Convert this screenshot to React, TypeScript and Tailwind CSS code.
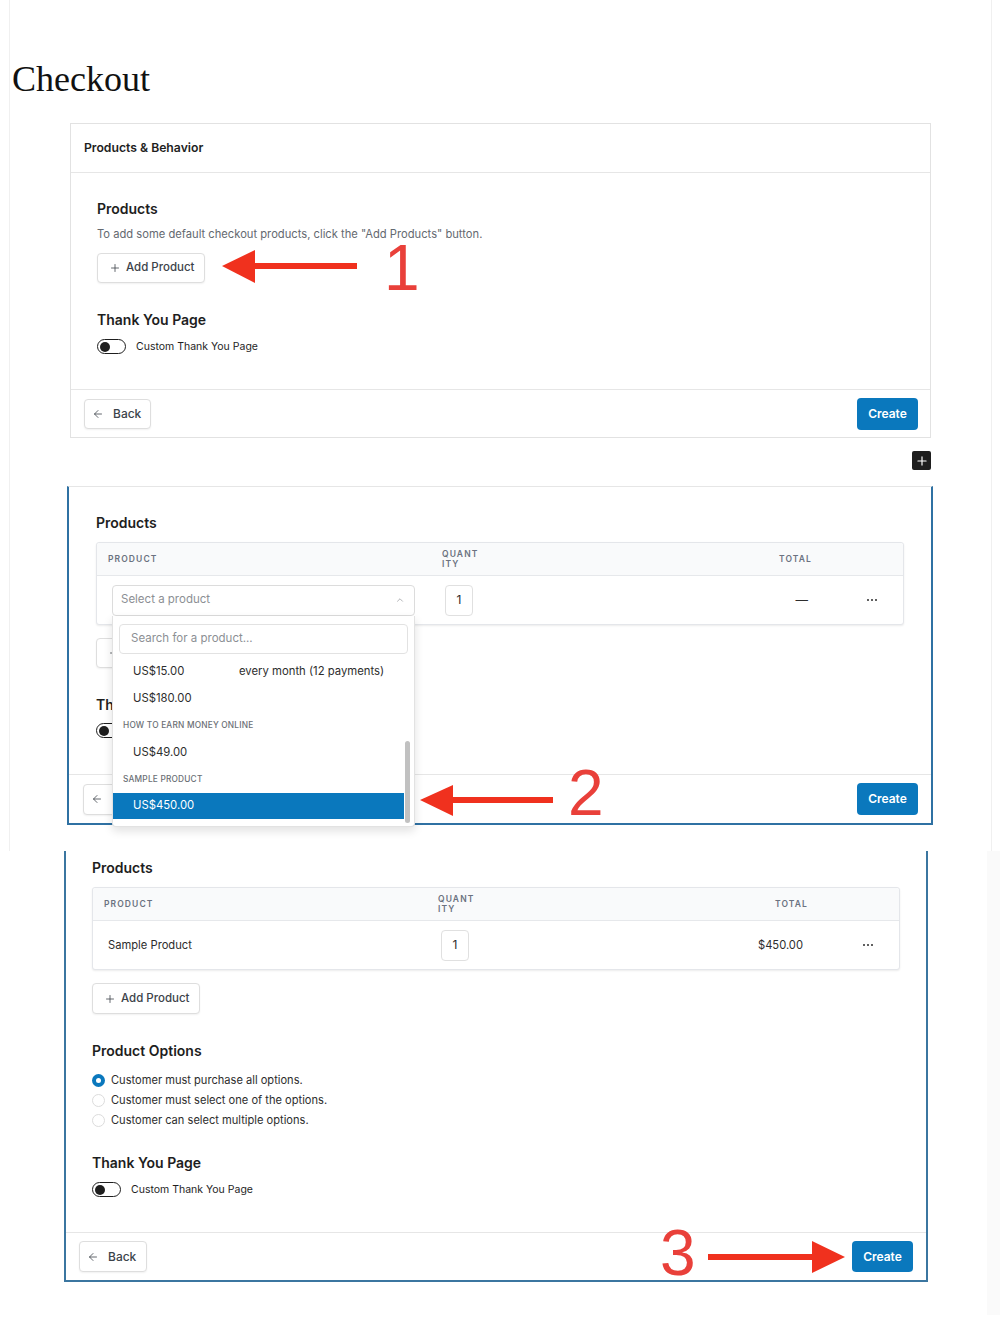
import React from "react";
import { Plus, ArrowLeft, ChevronUp } from "lucide-react";

const Toggle = () => (
  <div className="w-[29px] h-[15px] rounded-full border-[1.5px] border-[#1e1e1e] bg-white flex items-center pl-[1.5px] shrink-0">
    <div className="w-[10px] h-[10px] rounded-full bg-[#1e1e1e]" />
  </div>
);

const ToggleRow = () => (
  <div className="flex items-center gap-[10px] h-[15px]">
    <Toggle />
    <span className="text-[10.5px] text-[#1e1e1e]">Custom Thank You Page</span>
  </div>
);

const AddButton = ({ tall = false }: { tall?: boolean }) => (
  <div
    className={`${tall ? "h-[31px]" : "h-[30px]"} w-[108px] border border-[#dedede] rounded-[4px] bg-white shadow-[0_1px_2px_rgba(0,0,0,0.06)] flex items-center pl-[11px] gap-[5px] text-[11.5px] font-medium text-[#3c434a]`}
  >
    <Plus size={12} strokeWidth={1.6} />
    <span>Add Product</span>
  </div>
);

const BackButton = ({ tall = false }: { tall?: boolean }) => (
  <div
    className={`${tall ? "h-[31px] w-[68px]" : "h-[30px] w-[67px]"} border border-[#dedede] rounded-[4px] bg-white shadow-[0_1px_2px_rgba(0,0,0,0.06)] flex items-center pl-[7px] gap-[9px] text-[12px] font-medium text-[#3c434a]`}
  >
    <ArrowLeft size={12} strokeWidth={1.6} />
    <span>Back</span>
  </div>
);

const CreateButton = ({ tall = true }: { tall?: boolean }) => (
  <div
    className={`${tall ? "h-[32px]" : "h-[31px]"} w-[61px] rounded-[4px] bg-[#0a78bd] text-white text-[12px] font-semibold flex items-center justify-center`}
  >
    Create
  </div>
);

const Dots = () => (
  <div className="flex items-center gap-[2px]">
    <div className="w-[2px] h-[2px] rounded-full bg-[#2d2d2d]" />
    <div className="w-[2px] h-[2px] rounded-full bg-[#2d2d2d]" />
    <div className="w-[2px] h-[2px] rounded-full bg-[#2d2d2d]" />
  </div>
);

const TableHeader = () => (
  <div className="flex h-[33px] items-center bg-[#f9fafb] border-b border-[#e6e8eb] rounded-t-[3px] text-[8.5px] font-semibold tracking-[1.1px] text-[#6b7280]">
    <div className="w-[345px] pl-[11px]">PRODUCT</div>
    <div className="w-[254px] leading-[10px]">
      <div>QUANT</div>
      <div>ITY</div>
    </div>
    <div className="w-[116px] text-right">TOTAL</div>
  </div>
);

const QtyBox = () => (
  <div className="ml-[3px] w-[28px] h-[31px] border border-[#e0e0e0] rounded-[4px] bg-white flex items-center justify-center text-[12px] text-[#2d2d2d]">
    1
  </div>
);

const Dropdown = () => (
  <div className="absolute left-0 top-full z-10 w-[303px] h-[211px] bg-white border-x border-b border-[#e2e2e2] rounded-b-[4px] shadow-[0_4px_10px_rgba(0,0,0,0.12)] overflow-hidden">
    <div className="pt-[8px] px-[6px] pb-[4px]">
      <div className="h-[30px] border border-[#e2e2e2] rounded-[4px] flex items-center pl-[11px] text-[11.5px] text-[#8c8f94]">
        Search for a product...
      </div>
    </div>
    <div className="w-[291px] text-[11.3px] text-[#2d2d2d]">
      <div className="h-[27px] flex items-center pl-[20px]">
        <span className="w-[106px]">US$15.00</span>
        <span>every month (12 payments)</span>
      </div>
      <div className="h-[27px] flex items-center pl-[20px]">US$180.00</div>
      <div className="h-[27px] flex items-center pl-[10px] text-[8.3px] font-medium tracking-[0.2px] text-[#6b6f75]">
        HOW TO EARN MONEY ONLINE
      </div>
      <div className="h-[27px] flex items-center pl-[20px]">US$49.00</div>
      <div className="h-[27px] flex items-center pl-[10px] text-[8.3px] font-medium tracking-[0.2px] text-[#6b6f75]">
        SAMPLE PRODUCT
      </div>
      <div className="h-[26px] flex items-center pl-[20px] bg-[#0a78bd] text-white">US$450.00</div>
    </div>
    <div className="absolute right-[4px] top-[125px] w-[5px] h-[82px] rounded-full bg-[#c1c1c1]" />
  </div>
);

const Heading = ({ children, className = "" }: { children: React.ReactNode; className?: string }) => (
  <h3 className={`text-[14px] leading-[20px] font-semibold text-[#1e1e1e] ${className}`}>{children}</h3>
);

export default function App() {
  return (
    <div className="relative w-[1000px] h-[1332px] bg-white overflow-hidden font-['Inter','Noto_Sans',sans-serif]">
      {/* Top section */}
      <div className="ml-[9px] w-[983px] h-[851px] border-x border-[#f0f0f0] flex flex-col">
        <h1 className="mt-[61px] ml-[2px] font-['Liberation_Serif',serif] text-[36px] leading-none text-[#111]">
          Checkout
        </h1>

        {/* Panel 1 */}
        <div className="mt-[26px] ml-[60px] w-[861px] border border-[#e2e2e2] bg-white">
          <div className="h-[49px] border-b border-[#e6e6e6] flex items-center px-[13px] text-[12.2px] font-semibold text-[#1e1e1e]">
            Products &amp; Behavior
          </div>
          <div className="h-[216px] pt-[26px] pl-[26px]">
            <Heading>Products</Heading>
            <p className="mt-[7px] text-[11.2px] leading-[16px] text-[#646970]">
              To add some default checkout products, click the "Add Products" button.
            </p>
            <div className="mt-[11px]">
              <AddButton />
            </div>
            <Heading className="mt-[27px]">Thank You Page</Heading>
            <div className="mt-[9px]">
              <ToggleRow />
            </div>
          </div>
          <div className="h-[48px] border-t border-[#e6e6e6] flex items-center justify-between pl-[13px] pr-[12px]">
            <BackButton />
            <CreateButton />
          </div>
        </div>

        <div className="mt-[13px] ml-[60px] w-[861px] flex justify-end">
          <div className="w-[19px] h-[19px] bg-[#1e1e1e] rounded-[2px] flex items-center justify-center text-white">
            <Plus size={14} strokeWidth={2} />
          </div>
        </div>

        {/* Panel 2 */}
        <div className="mt-[16px] ml-[57px] w-[866px] h-[339px] border-t border-t-[#e6e6e6] border-x-2 border-b-2 border-x-[#2f71a3] border-b-[#2f71a3] bg-white flex flex-col">
          <div className="h-[287px] pt-[26px] px-[27px]">
            <Heading>Products</Heading>
            <div className="mt-[9px] w-[808px] rounded-[3px] border border-[#e4e6ea] shadow-[0_1px_2px_rgba(0,0,0,0.08)] bg-white">
              <TableHeader />
              <div className="h-[48px] flex items-center">
                <div className="w-[345px] pl-[15px]">
                  <div className="relative w-[303px] h-[31px]">
                    <div className="w-[303px] h-[31px] border border-[#dcdcdc] rounded-[4px] flex items-center justify-between pl-[8px] pr-[9px] text-[11.5px] text-[#8c8f94]">
                      <span>Select a product</span>
                      <ChevronUp size={10} strokeWidth={1.6} className="text-[#8c8f94]" />
                    </div>
                    <Dropdown />
                  </div>
                </div>
                <div className="w-[254px]">
                  <QtyBox />
                </div>
                <div className="w-[112px] text-right text-[12.5px] text-[#2d2d2d]">—</div>
                <div className="flex-1 pl-[59px]">
                  <Dots />
                </div>
              </div>
            </div>
            <div className="mt-[13px]">
              <AddButton />
            </div>
            <Heading className="mt-[27px]">Thank You Page</Heading>
            <div className="mt-[8px]">
              <ToggleRow />
            </div>
          </div>
          <div className="h-[49px] border-t border-[#e6e6e6] flex items-center justify-between pl-[14px] pr-[13px]">
            <BackButton tall />
            <CreateButton />
          </div>
        </div>
      </div>

      {/* Bottom section */}
      <div className="flex">
        <div className="ml-[64px] w-[864px] h-[431px] border-x-2 border-b-2 border-[#3b76a0] bg-white flex flex-col">
          <div className="h-[381px] pt-[7px] px-[26px]">
            <Heading>Products</Heading>
            <div className="mt-[9px] w-[808px] rounded-[3px] border border-[#e4e6ea] shadow-[0_1px_2px_rgba(0,0,0,0.08)] bg-white">
              <TableHeader />
              <div className="h-[48px] flex items-center text-[11.2px] text-[#2d2d2d]">
                <div className="w-[345px] pl-[15px]">Sample Product</div>
                <div className="w-[254px]">
                  <QtyBox />
                </div>
                <div className="w-[112px] text-right pr-[1px]">$450.00</div>
                <div className="flex-1 pl-[59px]">
                  <Dots />
                </div>
              </div>
            </div>
            <div className="mt-[13px]">
              <AddButton tall />
            </div>
            <Heading className="mt-[27px]">Product Options</Heading>
            <div className="mt-[9px] flex flex-col text-[11.1px] text-[#2d2d2d]">
              <div className="h-[20px] flex items-center gap-[6px]">
                <div className="w-[13px] h-[13px] rounded-full bg-[#0a78bd] flex items-center justify-center">
                  <div className="w-[5px] h-[5px] rounded-full bg-white" />
                </div>
                <span>Customer must purchase all options.</span>
              </div>
              <div className="h-[20px] flex items-center gap-[6px]">
                <div className="w-[13px] h-[13px] rounded-full border border-[#dcdcdc]" />
                <span>Customer must select one of the options.</span>
              </div>
              <div className="h-[20px] flex items-center gap-[6px]">
                <div className="w-[13px] h-[13px] rounded-full border border-[#dcdcdc]" />
                <span>Customer can select multiple options.</span>
              </div>
            </div>
            <Heading className="mt-[23px]">Thank You Page</Heading>
            <div className="mt-[9px]">
              <ToggleRow />
            </div>
          </div>
          <div className="h-[48px] border-t border-[#e6e6e6] flex items-center justify-between pl-[13px] pr-[13px]">
            <BackButton tall />
            <CreateButton tall={false} />
          </div>
        </div>
        <div className="ml-auto w-[13px] h-[464px] bg-[#fafafa]" />
      </div>

      {/* Annotations */}
      <svg className="absolute left-0 top-0 pointer-events-none" width="1000" height="1332" viewBox="0 0 1000 1332">
        <polygon points="222,266 255,250 255,283" fill="#f0311e" />
        <rect x="254" y="263" width="103" height="6" fill="#f0311e" />
        <polygon points="420,800 453,785 453,816" fill="#f0311e" />
        <rect x="452" y="797" width="101" height="6" fill="#f0311e" />
        <polygon points="845,1257 812,1241 812,1273" fill="#f0311e" />
        <rect x="708" y="1254" width="105" height="6" fill="#f0311e" />
      </svg>
      <span className="absolute left-[384px] top-[236px] font-['Liberation_Sans',sans-serif] text-[64px] leading-none text-[#e9403a]">
        1
      </span>
      <span className="absolute left-[568px] top-[761px] font-['Liberation_Sans',sans-serif] text-[64px] leading-none text-[#e9403a]">
        2
      </span>
      <span className="absolute left-[660px] top-[1221px] font-['Liberation_Sans',sans-serif] text-[64px] leading-none text-[#e9403a]">
        3
      </span>
    </div>
  );
}
